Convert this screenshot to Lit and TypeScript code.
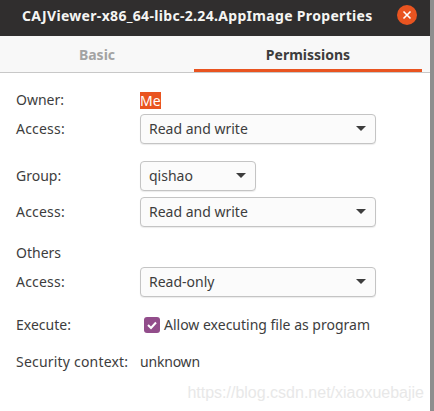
import { LitElement, html, css } from "lit";
import { customElement } from "lit/decorators.js";

@customElement("app-root")
export class AppRoot extends LitElement {
  static styles = css`
    :host {
      display: block;
      width: 434px;
      height: 411px;
      overflow: hidden;
      background: #8e8e8e;
      font-family: "Noto Sans", "Open Sans", sans-serif;
      font-size: 14px;
      color: #3d3d3d;
      position: relative;
    }
    .win {
      width: 430px;
      height: 411px;
      background: #fff;
      display: flex;
      flex-direction: column;
    }
    .title {
      height: 36px;
      background: #302e2e;
      display: flex;
      align-items: center;
      flex: none;
      position: relative;
      box-sizing: border-box;
      padding-bottom: 6px;
    }
    .title-text {
      margin-left: 22px;
      color: #f5f5f3;
      font-weight: 700;
      font-size: 14px;
      letter-spacing: 0.32px;
      white-space: nowrap;
    }
    .close {
      position: absolute;
      left: 397px;
      top: 5px;
      width: 20px;
      height: 20px;
      border-radius: 50%;
      background: #e95420;
      display: flex;
      align-items: center;
      justify-content: center;
    }
    .tabs {
      flex: none;
      background: #f8f8f8;
      border-bottom: 1px solid #c8c8c8;
      display: flex;
      box-sizing: border-box;
      height: 37px;
      padding-right: 8px;
    }
    .tab {
      width: 194px;
      flex: none;
      display: flex;
      align-items: center;
      justify-content: center;
      font-weight: 700;
      font-size: 14px;
      color: #a3a3a3;
      box-sizing: border-box;
      padding-top: 1px;
    }
    .tab.active {
      width: 228px;
      color: #3d3d3d;
      box-shadow: inset 0 -3px 0 #e95420;
    }
    .body {
      padding: 16px 0 0 16px;
      display: flex;
      flex-direction: column;
    }
    .row {
      display: flex;
      align-items: center;
      min-height: 30px;
    }
    .label {
      width: 124px;
      flex: none;
      white-space: nowrap;
      position: relative;
      top: -1px;
    }
    .wide {
      letter-spacing: 0.2px;
    }
    .tight {
      letter-spacing: -0.2px;
    }
    .me {
      background: #e95420;
      color: #fff;
      line-height: 17px;
      height: 17px;
      display: inline-block;
    }
    .combo {
      width: 236px;
      height: 30px;
      box-sizing: border-box;
      border: 1px solid #c4c4c4;
      border-radius: 4px;
      background: #fbfbfb;
      box-shadow: 0 1px 1px rgba(0, 0, 0, 0.08);
      display: flex;
      align-items: center;
      justify-content: space-between;
      padding: 0 9px 1px 8px;
    }
    .combo.small {
      width: 116px;
    }
    .arrow {
      width: 0;
      height: 0;
      border-left: 5px solid transparent;
      border-right: 5px solid transparent;
      border-top: 5px solid #3d3d3d;
    }
    .check {
      display: flex;
      align-items: center;
      gap: 4px;
      margin-left: 4px;
      white-space: nowrap;
    }
    .check-text {
      position: relative;
      top: -1px;
    }
    .box {
      width: 16px;
      height: 16px;
      border-radius: 3px;
      background: #924d8b;
      display: flex;
      align-items: center;
      justify-content: center;
    }
    .owner { height: 22px; min-height: 22px; }
    .g1 { margin-top: 3px; }
    .gap-group { margin-top: 17px; }
    .access2 { margin-top: 6px; }
    .others { margin-top: 13px; height: 26px; min-height: 26px; }
    .access3 { margin-top: 1px; }
    .exec { margin-top: 15px; height: 26px; min-height: 26px; }
    .sec { margin-top: 11px; height: 26px; min-height: 26px; }
    .sec .value { position: relative; top: -1px; }
    .wm {
      position: absolute;
      right: 10px;
      bottom: 9px;
      font-family: "Liberation Sans", sans-serif;
      font-size: 16px;
      color: #e8e8e8;
      white-space: nowrap;
    }
  `;

  private combo(text: string, small = false) {
    return html`<div class="combo ${small ? "small" : ""}">
      <span>${text}</span><span class="arrow"></span>
    </div>`;
  }

  render() {
    return html`
      <div class="win">
        <div class="title">
          <span class="title-text">CAJViewer-x86_64-libc-2.24.AppImage Properties</span>
          <span class="close">
            <svg width="10" height="10" viewBox="0 0 10 10">
              <path d="M1.5 1.5 8.5 8.5M8.5 1.5 1.5 8.5" stroke="#fff" stroke-width="1.6" fill="none" />
            </svg>
          </span>
        </div>
        <div class="tabs">
          <div class="tab">Basic</div>
          <div class="tab active">Permissions</div>
        </div>
        <div class="body">
          <div class="row owner">
            <span class="label">Owner:</span><span class="me">Me</span>
          </div>
          <div class="row g1">
            <span class="label wide">Access:</span>${this.combo("Read and write")}
          </div>
          <div class="row gap-group">
            <span class="label">Group:</span>${this.combo("qishao", true)}
          </div>
          <div class="row access2">
            <span class="label wide">Access:</span>${this.combo("Read and write")}
          </div>
          <div class="row others"><span class="label">Others</span></div>
          <div class="row access3">
            <span class="label wide">Access:</span>${this.combo("Read-only")}
          </div>
          <div class="row exec">
            <span class="label">Execute:</span>
            <span class="check">
              <span class="box">
                <svg width="12" height="12" viewBox="0 0 12 12">
                  <path d="M2 6 5 9 10 3.5" stroke="#fff" stroke-width="2" fill="none" />
                </svg>
              </span>
              <span class="check-text">Allow executing file as program</span>
            </span>
          </div>
          <div class="row sec">
            <span class="label wide">Security context:</span><span class="value tight">unknown</span>
          </div>
        </div>
      </div>
      <div class="wm">https://blog.csdn.net/xiaoxuebajie</div>
    `;
  }
}
